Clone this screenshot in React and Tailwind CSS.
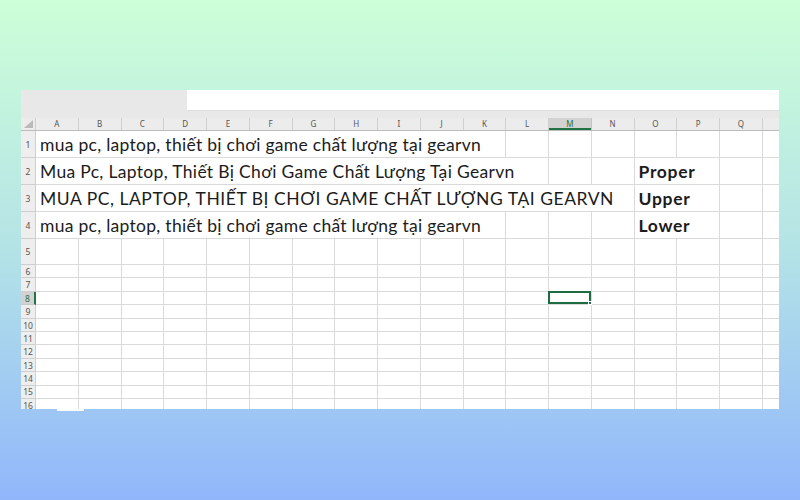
import React from "react";

const COLS = ["A","B","C","D","E","F","G","H","I","J","K","L","M","N","O","P","Q"];
const GRID = "grid grid-cols-[15px_repeat(17,42.76px)_1fr]";
const LINE = "border-r border-b border-[#dadada]";

function RowHead({ n, active }) {
  return (
    <div
      className={
        "flex items-center justify-center border-b border-r text-[8.5px] leading-none " +
        (active
          ? "bg-[#d2d2d2] border-r-2 border-r-[#217346] border-b-[#c8c8c8] text-[#217346]"
          : "bg-[#eeeeee] border-[#cfcfcf] text-[#555]")
      }
      style={{ fontFamily: '"Noto Sans", sans-serif' }}
    >
      <span className="pt-[2px]">{n}</span>
    </div>
  );
}

function TextCell({ span, children, extra }) {
  return (
    <div
      className={
        LINE +
        " flex items-center pl-[4px] whitespace-nowrap overflow-hidden text-[17.5px] text-[#1c1c1c] " +
        extra +
        " " +
        span
      }
      style={{ fontFamily: 'Lato, "Noto Sans", sans-serif' }}
    >
      <span className="pt-[2px]">{children}</span>
    </div>
  );
}

function Empty({ sel }) {
  return (
    <div className={LINE + " relative"}>
      {sel && (
        <div className="absolute -left-px -top-px w-[calc(100%+1px)] h-[calc(100%+1px)] border-2 border-[#1f6b41]">
          <div className="absolute -right-[3px] -bottom-[3px] w-[4px] h-[4px] bg-[#1f6b41] border border-white" />
        </div>
      )}
    </div>
  );
}

function EmptyRow({ n, h, activeCol }) {
  return (
    <div className={GRID + " " + h}>
      <RowHead n={n} active={activeCol !== undefined} />
      {COLS.map((c, i) => (
        <Empty key={c} sel={activeCol === i} />
      ))}
      <div className="border-b border-[#dadada]" />
    </div>
  );
}

export default function App() {
  return (
    <div className="w-[800px] h-[500px] overflow-hidden bg-gradient-to-b from-[#cdffd8] via-[#b4e3e6] to-[#92b6fb] pt-[90px] pl-[21px]">
      <div className="w-[758px] h-[319px] bg-white flex flex-col overflow-hidden relative">
        <div className="h-[28px] bg-[#e8e8e8] flex shrink-0">
          <div className="ml-[166px] flex-1 h-[21px] bg-white border-b border-[#dcdcdc]" />
        </div>
        <div className={GRID + " h-[13px] shrink-0 bg-[#ececec] border-b border-[#bcbcbc]"}>
          <div className="relative border-r border-[#cfcfcf]">
            <svg className="absolute right-[2px] bottom-[2px]" width="9" height="8" viewBox="0 0 9 8">
              <path d="M9 0 L9 8 L0 8 Z" fill="#b9b9b9" />
            </svg>
          </div>
          {COLS.map((c) => (
            <div
              key={c}
              className={
                "flex items-center justify-center text-[8px] leading-none border-r " +
                (c === "M"
                  ? "bg-[#d3d3d3] border-[#c4c4c4] text-[#217346] shadow-[inset_0_-2px_0_#217346]"
                  : "border-[#d0d0d0] text-[#555]")
              }
              style={{ fontFamily: '"Noto Sans", sans-serif' }}
            >
              {c}
            </div>
          ))}
          <div />
        </div>

        <div className={GRID + " h-[27px] shrink-0"}>
          <RowHead n={1} />
          <TextCell span="col-span-11" extra="tracking-[0.28px]">mua pc, laptop, thiết bị chơi game chất lượng tại gearvn</TextCell>
          <Empty /><Empty /><Empty /><Empty /><Empty /><Empty />
          <div className="border-b border-[#dadada]" />
        </div>
        <div className={GRID + " h-[27px] shrink-0"}>
          <RowHead n={2} />
          <TextCell span="col-span-12" extra="tracking-[0.32px]">Mua Pc, Laptop, Thiết Bị Chơi Game Chất Lượng Tại Gearvn</TextCell>
          <Empty /><Empty />
          <TextCell span="col-span-2" extra="font-bold tracking-[0.7px]">Proper</TextCell>
          <Empty />
          <div className="border-b border-[#dadada]" />
        </div>
        <div className={GRID + " h-[27px] shrink-0"}>
          <RowHead n={3} />
          <TextCell span="col-span-14" extra="tracking-[0.53px]">MUA PC, LAPTOP, THIẾT BỊ CHƠI GAME CHẤT LƯỢNG TẠI GEARVN</TextCell>
          <TextCell span="col-span-2" extra="font-bold tracking-[0.7px]">Upper</TextCell>
          <Empty />
          <div className="border-b border-[#dadada]" />
        </div>
        <div className={GRID + " h-[27px] shrink-0"}>
          <RowHead n={4} />
          <TextCell span="col-span-11" extra="tracking-[0.28px]">mua pc, laptop, thiết bị chơi game chất lượng tại gearvn</TextCell>
          <Empty /><Empty /><Empty />
          <TextCell span="col-span-2" extra="font-bold tracking-[0.7px]">Lower</TextCell>
          <Empty />
          <div className="border-b border-[#dadada]" />
        </div>

        <EmptyRow n={5} h="h-[26px] shrink-0" />
        <EmptyRow n={6} h="h-[13.4px] shrink-0" />
        <EmptyRow n={7} h="h-[13.4px] shrink-0" />
        <EmptyRow n={8} h="h-[13.4px] shrink-0" activeCol={12} />
        <EmptyRow n={9} h="h-[13.4px] shrink-0" />
        <EmptyRow n={10} h="h-[13.4px] shrink-0" />
        <EmptyRow n={11} h="h-[13.4px] shrink-0" />
        <EmptyRow n={12} h="h-[13.4px] shrink-0" />
        <EmptyRow n={13} h="h-[13.4px] shrink-0" />
        <EmptyRow n={14} h="h-[13.4px] shrink-0" />
        <EmptyRow n={15} h="h-[13.4px] shrink-0" />
        <EmptyRow n={16} h="h-[13.4px] shrink-0" />
      </div>
      <div className="ml-[36px] w-[27px] h-[2px] bg-white" />
    </div>
  );
}
